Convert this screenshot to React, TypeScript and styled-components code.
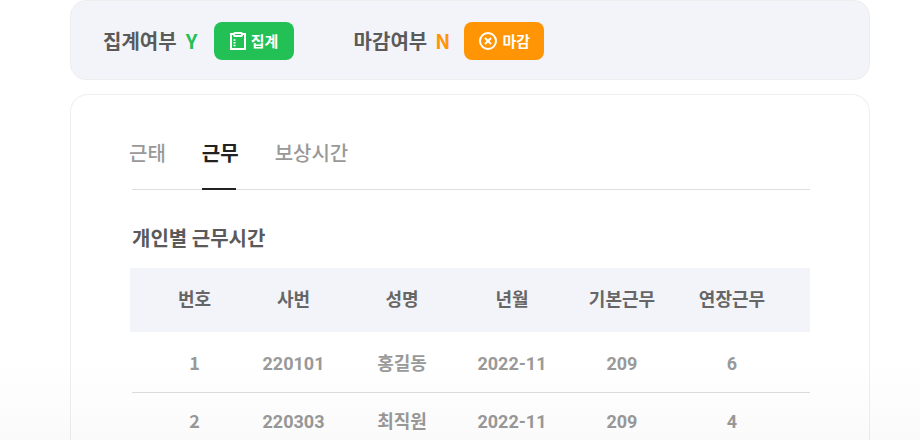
import React, { useState } from "react";
import styled, { createGlobalStyle } from "styled-components";

const GlobalStyle = createGlobalStyle`
  *, *::before, *::after { box-sizing: border-box; }
  body {
    margin: 0;
    background: #fff;
    color: #555;
    font-family: "Noto Sans CJK KR", "Noto Sans", sans-serif;
  }
  button { font-family: inherit; }
`;

const Page = styled.main`
  position: relative;
  display: flex;
  flex-direction: column;
  gap: 14px;
  height: 100vh;
  padding: 0 50px 0 70px;
  overflow: hidden;

  &::after {
    content: "";
    position: absolute;
    inset: auto 0 0 0;
    height: 80px;
    background: linear-gradient(rgba(0, 0, 0, 0), rgba(0, 0, 0, 0.02));
    pointer-events: none;
  }
`;

const StatusBar = styled.section`
  flex: none;
  display: flex;
  align-items: center;
  gap: 60px;
  padding: 21px 32px 19px;
  background: #f3f4f9;
  border: 1px solid #eee;
  border-radius: 16px;
`;

const StatusItem = styled.div`
  display: flex;
  align-items: center;
`;

const StatusLabel = styled.span`
  font-size: 20px;
  line-height: 36px;
  font-weight: 700;
  color: #5a5a5a;
`;

const StatusValue = styled.strong<{ $color: string }>`
  width: 14px;
  margin: 0 15px 0 8px;
  text-align: center;
  font-size: 20px;
  line-height: 36px;
  font-weight: 700;
  color: ${(p) => p.$color};
`;

const ActionButton = styled.button<{ $color: string }>`
  display: flex;
  align-items: center;
  justify-content: center;
  gap: 4px;
  width: 80px;
  height: 38px;
  padding: 0;
  border: 0;
  border-radius: 8px;
  background: ${(p) => p.$color};
  color: #fff;
  font-size: 15px;
  font-weight: 700;
  line-height: 20px;
  cursor: pointer;
`;

const Card = styled.section`
  flex: 1 0 auto;
  padding: 34px 59px 40px 61px;
  border: 1px solid #eee;
  border-bottom: 0;
  border-radius: 18px 18px 0 0;
`;

const TabBar = styled.div`
  display: flex;
  gap: 36px;
  border-bottom: 1px solid #ddd;
`;

const Tab = styled.button<{ $active: boolean }>`
  height: 61px;
  margin: 0 0 -1px;
  padding: 0 0 14px;
  border: 0;
  background: linear-gradient(#222, #222) left bottom / calc(100% - 3px) ${(p) => (p.$active ? "2px" : "0")} no-repeat;
  color: ${(p) => (p.$active ? "#222" : "#999")};
  font-size: 20px;
  line-height: 30px;
  font-weight: ${(p) => (p.$active ? 700 : 500)};
  cursor: pointer;

  &:first-child { margin-left: -3px; }
`;

const Title = styled.h2`
  margin: 33px 0 15px;
  font-size: 20px;
  line-height: 30px;
  font-weight: 700;
  color: #5a5a5a;
`;

const Table = styled.table`
  width: 100%;
  table-layout: fixed;
  border-collapse: collapse;
  font-size: 18px;
  line-height: 28px;
  text-align: center;
`;

const Column = styled.col<{ $share: number }>`
  width: ${(p) => p.$share}%;
`;

const HeadCell = styled.th`
  height: 64px;
  padding: 0 0 4px;
  background: #f3f4f9;
  color: #666;
  font-weight: 700;

  &:first-child { padding-left: 17px; box-shadow: -2px 0 #f3f4f9; }
  &:last-child { padding-right: 23px; }
`;

const Cell = styled.td<{ $numeric?: boolean }>`
  height: 56px;
  padding: ${(p) => (p.$numeric ? "4px 0 0" : "0")};
  border-bottom: 1px solid #ddd;
  color: #999;
  font-family: ${(p) => (p.$numeric ? 'Roboto, "Noto Sans CJK KR", sans-serif' : "inherit")};
  font-weight: 700;

  tr:first-child > & { height: 60px; }
  &:first-child { padding-left: 17px; }
  &:last-child { padding-right: 23px; }
`;

const ClipboardIcon = () => (
  <svg width="18" height="20" viewBox="0 0 18 20" fill="none" stroke="#fff" strokeWidth="2" aria-hidden="true">
    <path d="M5 3H2v15h14V3h-3" />
    <rect x="5" y="2" width="8" height="3" rx="1" />
    <path d="M4.5 9h2M4.5 11.8h2M4.5 14.6h2" strokeWidth="1.5" />
  </svg>
);

const CloseCircleIcon = () => (
  <svg width="20" height="20" viewBox="0 0 20 20" fill="none" stroke="#fff" strokeWidth="2" aria-hidden="true">
    <circle cx="10" cy="10" r="8" />
    <path d="M7 7l6 6M13 7l-6 6" />
  </svg>
);

const tabs = ["근태", "근무", "보상시간"];
const columns = [
  { name: "번호", weight: 108 },
  { name: "사번", weight: 107 },
  { name: "성명", weight: 110 },
  { name: "년월", weight: 110 },
  { name: "기본근무", weight: 110 },
  { name: "연장근무", weight: 133 },
];
const totalWeight = columns.reduce((sum, c) => sum + c.weight, 0);
const rows = [
  ["1", "220101", "홍길동", "2022-11", "209", "6"],
  ["2", "220303", "최직원", "2022-11", "209", "4"],
];

export default function App() {
  const [active, setActive] = useState("근무");
  return (
    <>
      <GlobalStyle />
      <Page>
        <StatusBar>
          <StatusItem>
            <StatusLabel>집계여부</StatusLabel>
            <StatusValue $color="#23c055">Y</StatusValue>
            <ActionButton type="button" $color="#23c055">
              <ClipboardIcon />
              집계
            </ActionButton>
          </StatusItem>
          <StatusItem>
            <StatusLabel>마감여부</StatusLabel>
            <StatusValue $color="#ff9505">N</StatusValue>
            <ActionButton type="button" $color="#ff9505">
              <CloseCircleIcon />
              마감
            </ActionButton>
          </StatusItem>
        </StatusBar>
        <Card>
          <TabBar role="tablist">
            {tabs.map((name) => (
              <Tab
                key={name}
                type="button"
                role="tab"
                aria-selected={name === active}
                $active={name === active}
                onClick={() => setActive(name)}
              >
                {name}
              </Tab>
            ))}
          </TabBar>
          <Title id="hours-title">개인별 근무시간</Title>
          <Table aria-labelledby="hours-title">
            <colgroup>
              {columns.map((c) => (
                <Column key={c.name} $share={(c.weight / totalWeight) * 100} />
              ))}
            </colgroup>
            <thead>
              <tr>
                {columns.map((c) => (
                  <HeadCell key={c.name} scope="col">{c.name}</HeadCell>
                ))}
              </tr>
            </thead>
            <tbody>
              {rows.map((row) => (
                <tr key={row[0]}>
                  {row.map((value, i) => (
                    <Cell key={columns[i].name} $numeric={i !== 0 && i !== 2}>{value}</Cell>
                  ))}
                </tr>
              ))}
            </tbody>
          </Table>
        </Card>
      </Page>
    </>
  );
}
